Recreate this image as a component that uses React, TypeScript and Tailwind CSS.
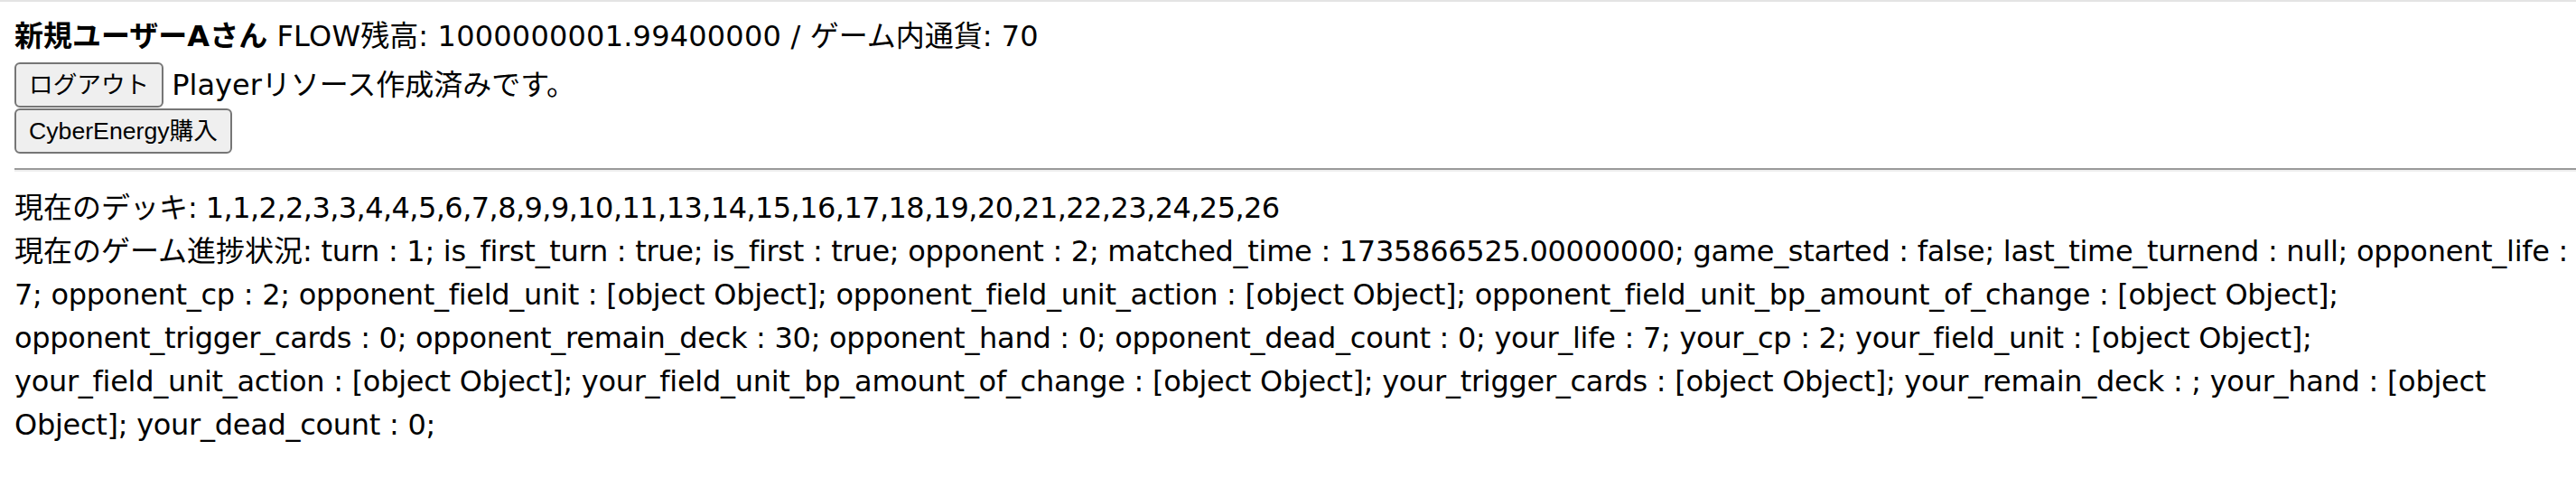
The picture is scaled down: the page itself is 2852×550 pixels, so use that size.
import React from 'react';

const font = "font-['DejaVu_Sans','Noto_Sans_CJK_JP',sans-serif]";

const statusLines = [
  'turn : 1; is_first_turn : true; is_first : true; opponent : 2; matched_time : 1735866525.00000000; game_started : false; last_time_turnend : null; opponent_life :',
  '7; opponent_cp : 2; opponent_field_unit : [object Object]; opponent_field_unit_action : [object Object]; opponent_field_unit_bp_amount_of_change : [object Object];',
  'opponent_trigger_cards : 0; opponent_remain_deck : 30; opponent_hand : 0; opponent_dead_count : 0; your_life : 7; your_cp : 2; your_field_unit : [object Object];',
  'your_field_unit_action : [object Object]; your_field_unit_bp_amount_of_change : [object Object]; your_trigger_cards : [object Object]; your_remain_deck : ; your_hand : [object',
  'Object]; your_dead_count : 0;',
];

const Btn: React.FC<{ children: React.ReactNode }> = ({ children }) => (
  <button className="h-[50px] px-[14px] bg-[#efefef] border-2 border-[#767676] rounded-[6px] text-[26.67px] leading-none text-black font-['Liberation_Sans','Noto_Sans_CJK_JP',sans-serif]">
    {children}
  </button>
);

export default function App() {
  return (
    <div className={`w-[2852px] h-[550px] bg-white text-black text-[32px] ${font}`}>
      <div className="h-[2px] bg-[#e4e4e4]" />
      <div className="pl-[16px] pt-[14px]">
        <div className="h-[48px] leading-[48px] whitespace-nowrap">
          <b>新規ユーザーAさん</b>
          <span className="tracking-[0.2px]"> FLOW</span>残高<span className="tracking-[0.2px]">: 1000000001.99400000 / </span>ゲーム内通貨: 70
        </div>
        <div className="flex items-center gap-[9px] h-[56px] pt-[4px]">
          <Btn>ログアウト</Btn>
          <span className="leading-[48px] whitespace-nowrap">Playerリソース作成済みです。</span>
        </div>
        <div className="flex items-start h-[52px]">
          <Btn>CyberEnergy購入</Btn>
        </div>
      </div>
      <hr className="ml-[16px] mt-[14px] border-0 border-t-2 border-t-[#9a9a9a] border-b-2 border-b-[#eeeeee]" />
      <div className="pl-[16px] pt-[16px]">
        <div className="h-[48px] leading-[48px] whitespace-nowrap">
          現在のデッキ<span className="tracking-[-0.57px]">: 1,1,2,2,3,3,4,4,5,6,7,8,9,9,10,11,13,14,15,16,17,18,19,20,21,22,23,24,25,26</span>
        </div>
        {statusLines.map((l, i) => (
          <div key={i} className="h-[48px] leading-[48px] whitespace-nowrap">
            {i === 0 && '現在のゲーム進捗状況'}
            <span className="tracking-[-0.28px]">{i === 0 ? ': ' + l : l}</span>
          </div>
        ))}
      </div>
    </div>
  );
}
